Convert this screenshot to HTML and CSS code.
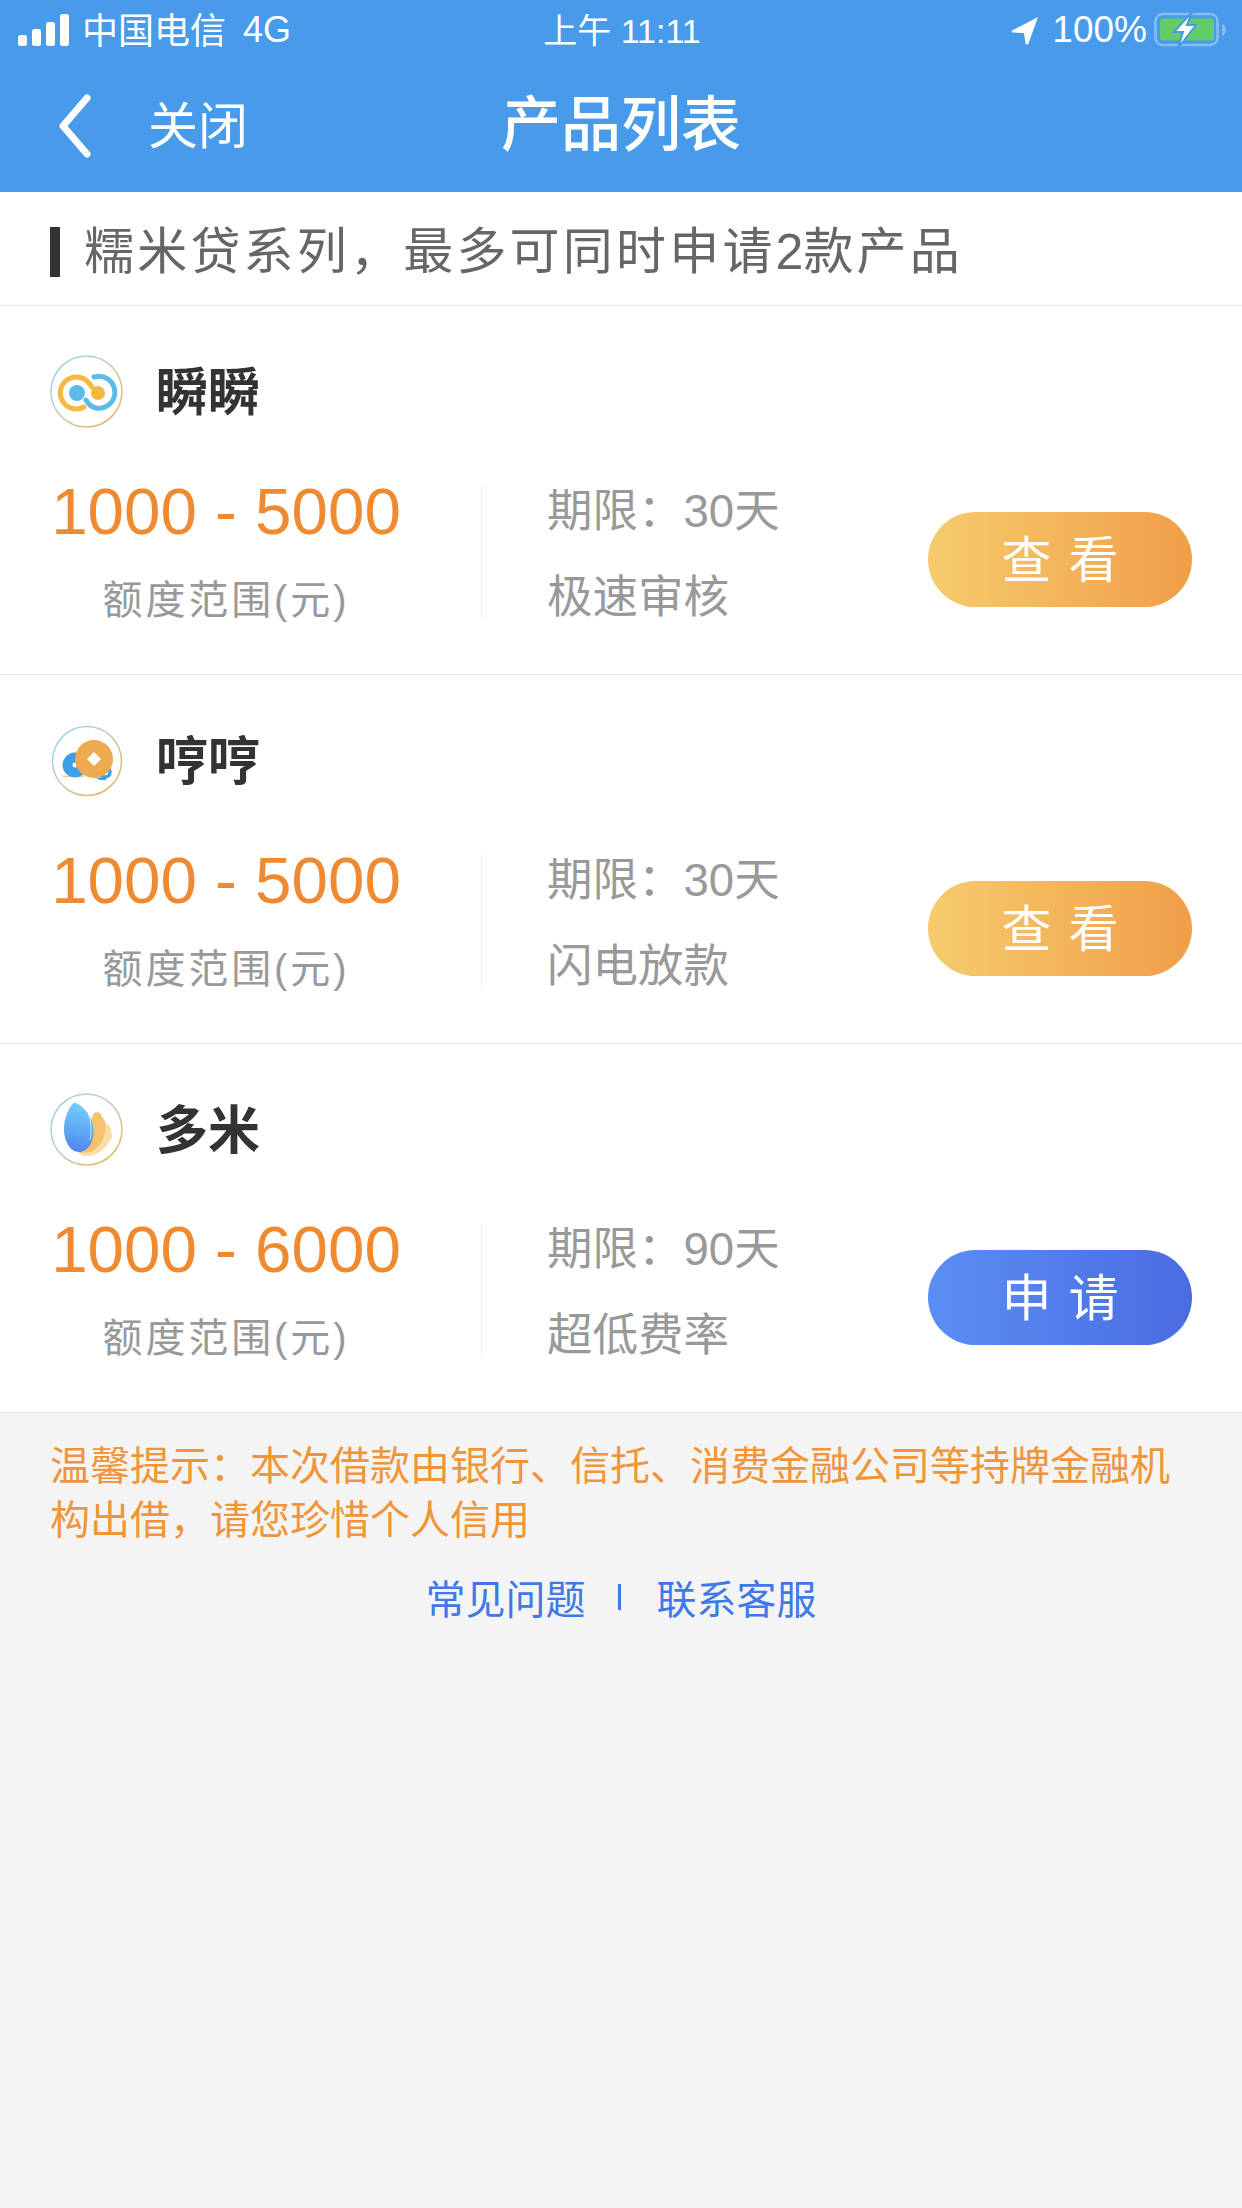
FILE: index.html
```html
<!DOCTYPE html>
<html lang="zh-CN">
<head>
    <meta charset="UTF-8">
    <meta name="viewport" content="width=device-width, initial-scale=1.0">
    <title>产品列表</title>
    <link rel="stylesheet" href="styles.css">
</head>
<body>

    <!-- Blue top area: status bar and title bar -->
    <div class="top">
        <div class="status">
            <div class="status-left">
                <svg class="signal" width="52" height="32" viewBox="0 0 52 32">
                    <rect x="0" y="21" width="9" height="11" rx="2.5"/>
                    <rect x="14" y="15" width="9" height="17" rx="2.5"/>
                    <rect x="28" y="8" width="9" height="24" rx="2.5"/>
                    <rect x="42" y="0" width="9" height="32" rx="2.5"/>
                </svg>
                <span class="carrier">中国电信</span>
                <span class="network">4G</span>
            </div>
            <div class="status-time">上午 11:11</div>
            <div class="status-right">
                <svg class="arrow" width="28" height="29" viewBox="0 0 28 29">
                    <path d="M27 1 L1 14.5 Q0 16 2 16.5 L13 17 L14.5 27.5 Q16 29.5 17.5 27.5 Z" fill="#fff"/>
                </svg>
                <span class="percent">100%</span>
                <svg class="battery" width="72" height="36" viewBox="0 0 72 36">
                    <rect x="1.5" y="2" width="62" height="31" rx="7" fill="none" stroke="#86bcf1" stroke-width="2.5"/>
                    <rect x="6" y="6.5" width="54" height="22" rx="3" fill="#62cc66"/>
                    <path d="M68 12 Q72 14 72 18 Q72 22 68 24 Z" fill="#86bcf1"/>
                    <path d="M38 0 L20 20 L29 20 L24 36 L42 13 L33 13 Z" fill="#fff" stroke="#479bea" stroke-width="2"/>
                </svg>
            </div>
        </div>
        <div class="titlebar">
            <div class="back">
                <svg class="chevron" width="34" height="64" viewBox="0 0 34 64">
                    <path d="M29 4 L5 32 L29 60" fill="none" stroke="#fff" stroke-width="7" stroke-linecap="round" stroke-linejoin="round"/>
                </svg>
                <span class="close">关闭</span>
            </div>
            <div class="title">产品列表</div>
        </div>
    </div>

    <!-- Section heading -->
    <div class="notice">
        <span class="notice-bar"></span>
        <span class="notice-text">糯米贷系列，最多可同时申请<span class="notice-num">2</span>款产品</span>
    </div>

    <!-- Product cards -->
    <div class="card">
        <div class="card-head">
            <svg class="logo" width="73" height="73" viewBox="0 0 73 73">
                <defs>
                    <linearGradient id="ring1" x1="0" y1="0" x2="1" y2="1">
                        <stop offset="0" stop-color="#8fd6f2"/>
                        <stop offset="0.5" stop-color="#c5cfb0"/>
                        <stop offset="1" stop-color="#f0ae4c"/>
                    </linearGradient>
                </defs>
                <circle cx="36.5" cy="36.5" r="35.5" fill="#fff" stroke="url(#ring1)" stroke-width="1.5"/>
                <path d="M34 52 A16 16 0 1 1 38 27 L42 32" fill="none" stroke="#f5b942" stroke-width="5" stroke-linecap="round"/>
                <path d="M44 22 A16 16 0 1 1 46 53 Q40 52 36 45" fill="none" stroke="#5bbcec" stroke-width="5" stroke-linecap="round"/>
                <circle cx="27" cy="38" r="8" fill="#5bbcec"/>
                <circle cx="48" cy="38" r="7" fill="#f5b942"/>
            </svg>
            <span class="name">瞬瞬</span>
        </div>
        <div class="card-body">
            <div class="range">
                <div class="amount">1000 - 5000</div>
                <div class="range-label">额度范围(元)</div>
            </div>
            <div class="divider"></div>
            <div class="info">
                <div class="info-line">期限：<span class="term">30天</span></div>
                <div class="info-line">极速审核</div>
            </div>
            <div class="btn btn-orange"><span>查</span><span>看</span></div>
        </div>
    </div>

    <div class="card">
        <div class="card-head">
            <svg class="logo" width="73" height="73" viewBox="0 0 73 73">
                <circle cx="37" cy="37" r="34.5" fill="#fff" stroke="url(#ring1)" stroke-width="1.5"/>
                <path d="M10 51.5 H34 V53 H14 Z" fill="#f5c98a"/>
                <circle cx="25" cy="41" r="7.5" fill="none" stroke="#3f9fe6" stroke-width="10"/>
                <circle cx="55" cy="48" r="5" fill="none" stroke="#3f9fe6" stroke-width="3.5"/>
                <path d="M45 53.5 H56 V56 H50 Z" fill="#3f9fe6"/>
                <circle cx="44" cy="35" r="19" fill="#eeaa50"/>
                <path d="M44 28 L51 35 L44 42 L37 35 Z" fill="#fff"/>
            </svg>
            <span class="name">哼哼</span>
        </div>
        <div class="card-body">
            <div class="range">
                <div class="amount">1000 - 5000</div>
                <div class="range-label">额度范围(元)</div>
            </div>
            <div class="divider"></div>
            <div class="info">
                <div class="info-line">期限：<span class="term">30天</span></div>
                <div class="info-line">闪电放款</div>
            </div>
            <div class="btn btn-orange"><span>查</span><span>看</span></div>
        </div>
    </div>

    <div class="card">
        <div class="card-head">
            <svg class="logo" width="73" height="73" viewBox="0 0 73 73">
                <defs>
                    <linearGradient id="seed" x1="0.5" y1="0" x2="0.4" y2="1">
                        <stop offset="0" stop-color="#72d0fa"/>
                        <stop offset="1" stop-color="#5186f0"/>
                    </linearGradient>
                </defs>
                <circle cx="36.5" cy="36.5" r="35.5" fill="#fff" stroke="url(#ring1)" stroke-width="1.5"/>
                <path d="M44 20 C48 18 51 20 52 24 C55 26 56 29 56 31 C60 32 62 35 61 38 C63 42 62 46 59 49 C54 58 44 64 36 63 C32 63 30 61 28 59 Z" fill="#f9dca8"/>
                <path d="M44 20 C48 18 51 20 52 24 C55 28 56 33 55 38 C54 48 48 56 40 59 C34 60 30 60 28 59 Z" fill="#f5c46a"/>
                <path d="M24 10 C28 10 30 12 33 15 C40 21 44 30 43.5 40 C43 52 36 59 29 59 C20 59 14 48 14 36 C14 26 18 17 21 13 C22 11 23 10 24 10 Z" fill="url(#seed)"/>
                <path d="M38 21 Q43 32 40 47" fill="none" stroke="#bfeafd" stroke-width="1"/>
            </svg>
            <span class="name">多米</span>
        </div>
        <div class="card-body">
            <div class="range">
                <div class="amount">1000 - 6000</div>
                <div class="range-label">额度范围(元)</div>
            </div>
            <div class="divider"></div>
            <div class="info">
                <div class="info-line">期限：<span class="term">90天</span></div>
                <div class="info-line">超低费率</div>
            </div>
            <div class="btn btn-blue"><span>申</span><span>请</span></div>
        </div>
    </div>

    <!-- Footer note and links -->
    <div class="footer">
        <p class="tip">温馨提示：本次借款由银行、信托、消费金融公司等持牌金融机构出借，请您珍惜个人信用</p>
        <div class="links">
            <a class="link">常见问题</a>
            <span class="link-sep"></span>
            <a class="link">联系客服</a>
        </div>
    </div>

</body>
</html>
```

FILE: styles.css
```css
/* General styling for the page */
body {
    margin: 0;
    width: 1242px;
    min-height: 2208px;
    background-color: #f4f4f4;
    font-family: "Liberation Sans", "Noto Sans CJK SC", sans-serif;
}

/* Blue top area */
.top {
    height: 192px;
    background-color: #479bea;
    color: #fff;
}

.status {
    height: 60px;
    padding: 0 16px 0 18px;
    display: grid;
    grid-template-columns: 1fr auto 1fr;
    align-items: center;
    font-size: 36px;
}

.status-left {
    display: flex;
    align-items: center;
}

.signal {
    fill: #fff;
    margin-right: 12px;
}

.carrier {
    margin-right: 17px;
    padding-bottom: 5px;
}

.status-time {
    font-size: 34px;
    padding-bottom: 4px;
}

.status-right {
    display: flex;
    align-items: center;
    justify-content: flex-end;
}

.percent {
    font-size: 37px;
    margin: 0 7px 0 13px;
}

/* Title bar */
.titlebar {
    height: 132px;
    padding: 0 58px;
    display: grid;
    grid-template-columns: 1fr auto 1fr;
    align-items: center;
}

.back {
    display: flex;
    align-items: center;
}

.close {
    font-size: 50px;
    margin-left: 56px;
    padding-bottom: 8px;
}

.title {
    font-size: 60px;
    font-weight: 500;
    padding-bottom: 14px;
}

/* Section heading */
.notice {
    height: 114px;
    box-sizing: border-box;
    padding-left: 50px;
    display: flex;
    align-items: center;
    background: #fff;
    border-bottom: 1px solid #e8e8e8;
}

.notice-bar {
    width: 10px;
    height: 50px;
    margin: 7px 24px 0 0;
    background: #333;
}

.notice-text {
    font-size: 50px;
    letter-spacing: 3.2px;
    color: #666;
    padding-bottom: 4px;
}

.notice-num {
    letter-spacing: 0;
}

/* Product card */
.card {
    height: 369px;
    box-sizing: border-box;
    padding: 49px 50px 0;
    background: #fff;
    border-bottom: 1px solid #e8e8e8;
}

.card-head {
    display: flex;
    align-items: center;
    height: 73px;
}

.name {
    margin-left: 33px;
    padding-bottom: 6px;
    font-size: 52px;
    font-weight: 700;
    color: #333;
}

.card-body {
    display: flex;
    align-items: center;
    height: 132px;
    margin-top: 58px;
}

.range {
    width: 352px;
    padding-top: 8px;
    text-align: center;
}

.amount {
    font-size: 65.5px;
    line-height: 60px;
    white-space: nowrap;
    color: #f08a30;
}

.range-label {
    margin-top: 28px;
    font-size: 40px;
    line-height: 60px;
    letter-spacing: 2.9px;
    color: #999;
}

.divider {
    width: 1px;
    height: 132px;
    margin-left: 79px;
    background: #eee;
}

.info {
    display: flex;
    flex-direction: column;
    height: 172px;
    margin: 6px 0 0 65px;
    font-size: 45.5px;
    color: #999;
}

.info-line {
    height: 86px;
    line-height: 86px;
}

/* Buttons */
.btn {
    width: 264px;
    height: 95px;
    box-sizing: border-box;
    margin-left: auto;
    margin-top: 14px;
    padding-bottom: 6px;
    border-radius: 48px;
    display: flex;
    align-items: center;
    justify-content: center;
    gap: 17px;
    font-size: 50px;
    color: #fff;
}

.btn-orange {
    background: linear-gradient(to right, #f6cb6e, #f09e48);
}

.btn-blue {
    background: linear-gradient(to right, #5b8ef5, #4a6ce0);
}

/* Footer note and links */
.footer {
    padding: 26px 50px 0;
}

.tip {
    margin: 0;
    font-size: 40px;
    line-height: 54px;
    color: #f0953a;
}

.links {
    margin-top: 21px;
    display: flex;
    align-items: center;
    justify-content: center;
    font-size: 40px;
    color: #3f78e8;
}

.link-sep {
    width: 3px;
    height: 26px;
    margin: 0 36px 0 32px;
    background: #3f78e8;
}
```
